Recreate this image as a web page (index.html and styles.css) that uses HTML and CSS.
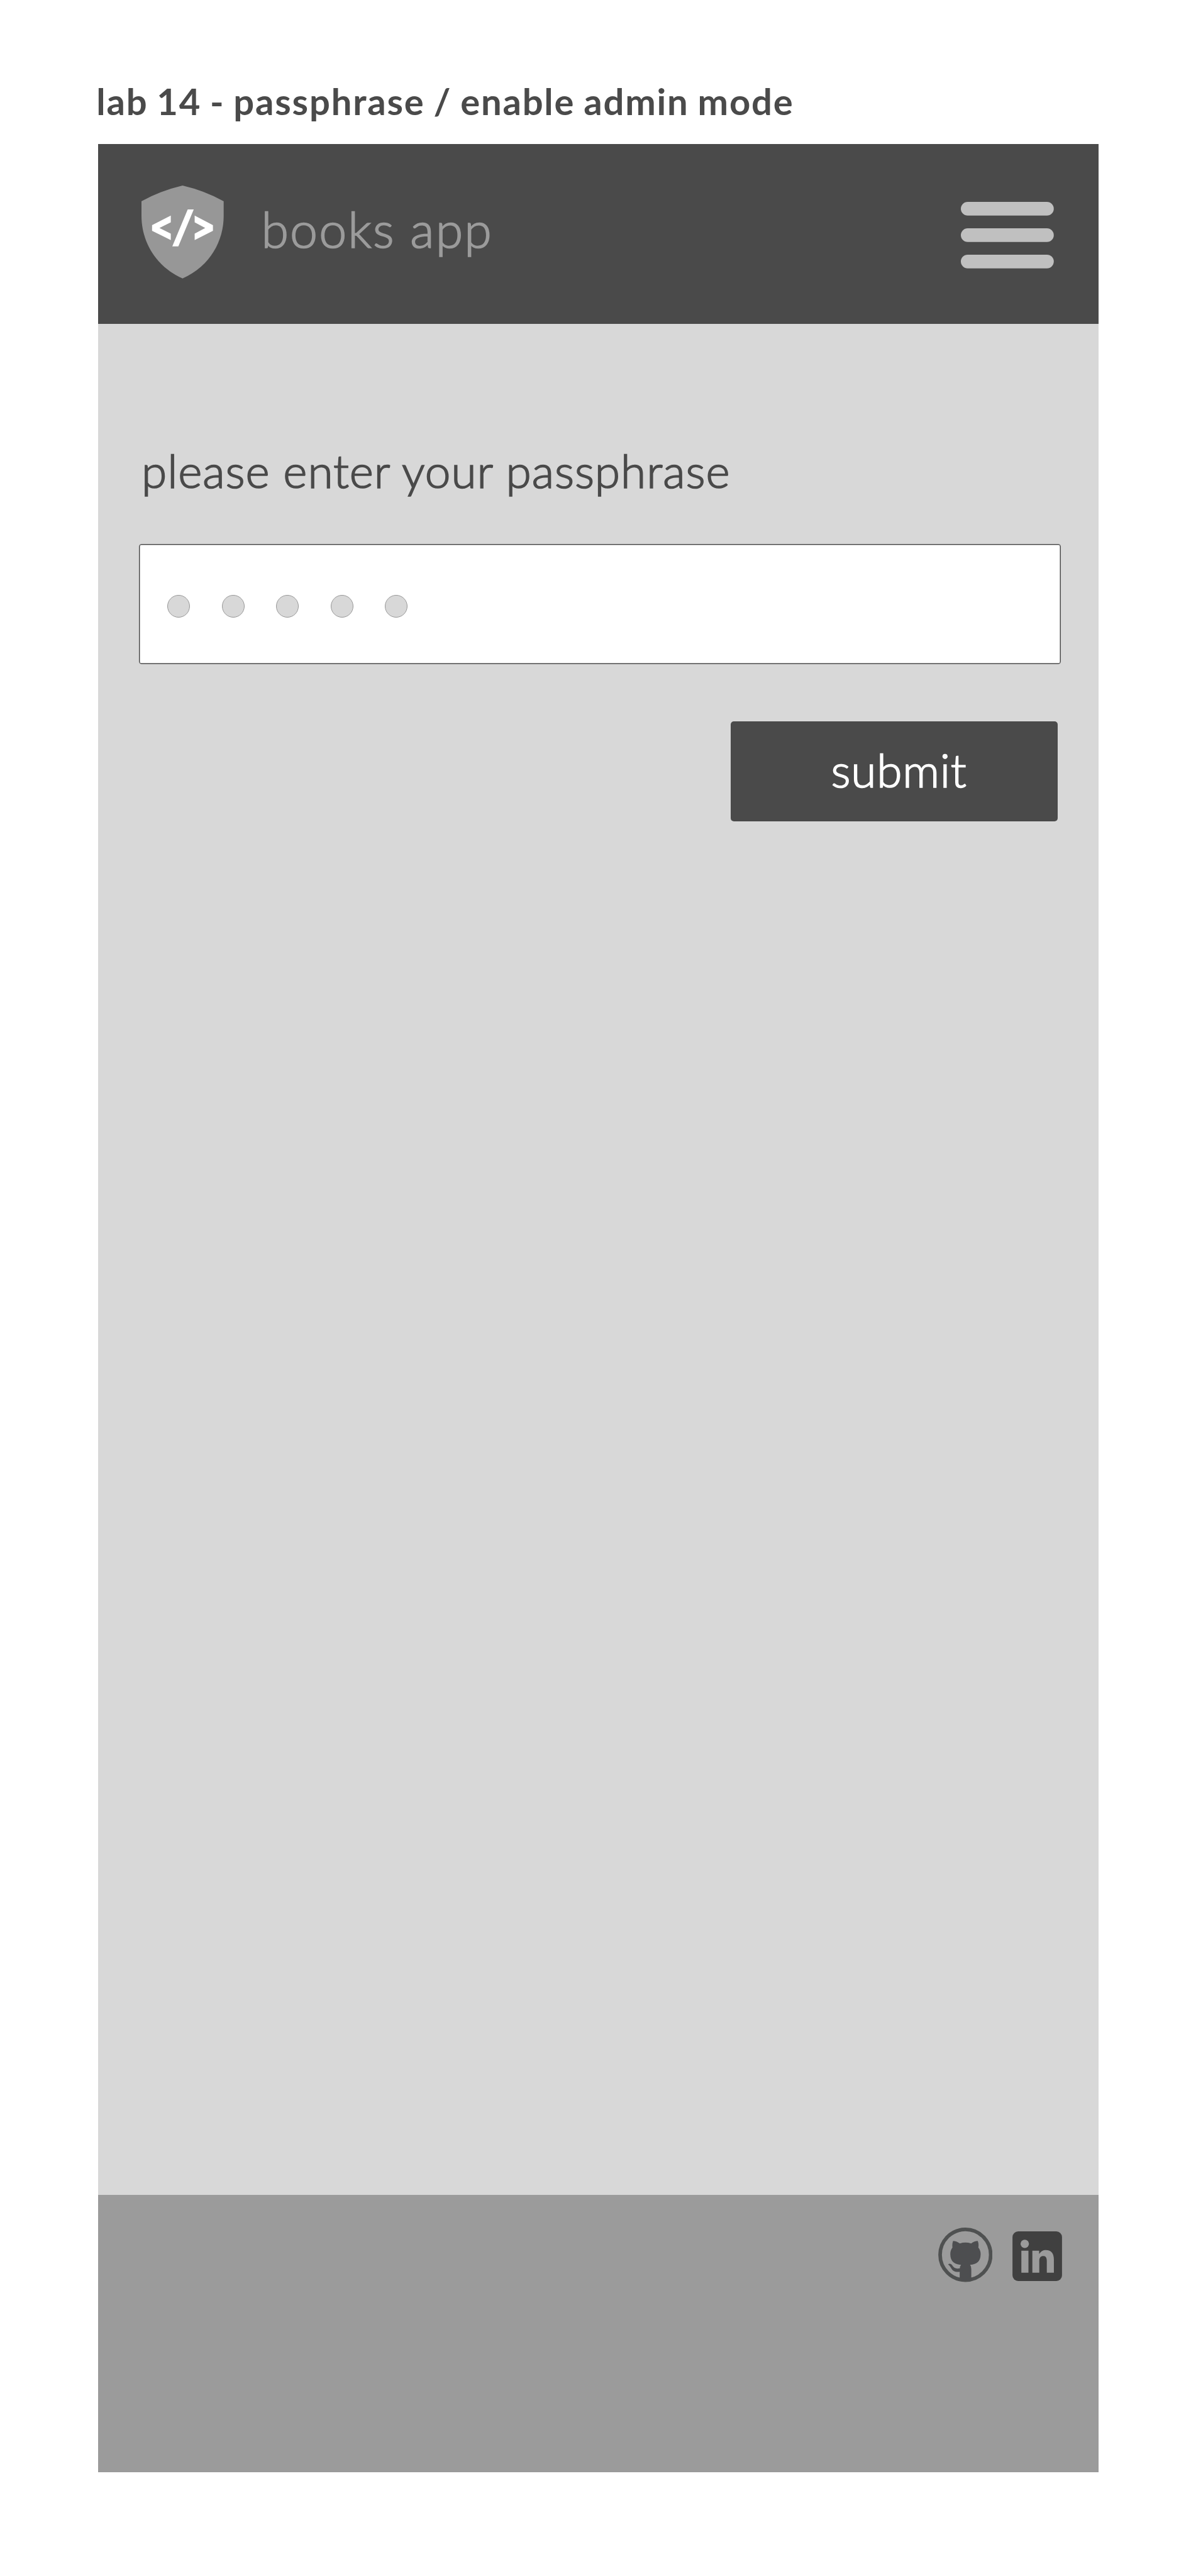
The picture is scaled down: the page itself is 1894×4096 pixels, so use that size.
FILE: index.html
```html
<!DOCTYPE html>
<html lang="en">
<head>
<meta charset="utf-8">
<title>books app</title>
<link rel="stylesheet" href="styles.css">
</head>
<body>
<h1 class="caption">lab 14 - passphrase / enable admin mode</h1>
<div class="screen">
  <header class="header">
    <svg class="logo" viewBox="97 88 544 615" preserveAspectRatio="none" aria-hidden="true">
      <path fill="#979797" d="M369 88Q515 122 641 192V290C641 450 555 620 369 703C183 620 97 450 97 290V192Q223 122 369 88Z"/>
      <path fill="#fff" d="M291 287V331L216 369L291 406V449L167 388V350ZM403 246H443L341 491H301ZM449 287L570 350V388L449 449V406L519 369L449 331Z"/>
    </svg>
    <span class="brand">books app</span>
    <svg class="menu" viewBox="0 0 147.8 105.7" role="img" aria-label="menu">
      <rect width="147.8" height="21.8" rx="10.9"/>
      <rect y="42" width="147.8" height="21.8" rx="10.9"/>
      <rect y="83.9" width="147.8" height="21.8" rx="10.9"/>
    </svg>
  </header>
  <main class="main">
    <label class="label">please enter your passphrase</label>
    <div class="field">
      <span class="dot"></span><span class="dot"></span><span class="dot"></span><span class="dot"></span><span class="dot"></span>
    </div>
    <button class="submit" type="button">submit</button>
  </main>
  <footer class="footer">
    <svg class="github" viewBox="90 342 360 361" aria-hidden="true">
      <circle cx="270" cy="522.5" r="168" fill="none" stroke="#4f5151" stroke-width="24"/>
      <path fill="#4d4e50" d="M188 431C204 431 219 438 233 447Q270 436 308 447C322 438 337 431 352 431Q360 451 356 474C367 487 372 503 371 521C370 565 347 584 301 589Q309 599 309 617V671Q311 684 315 688Q270 699 224 688Q232 683 232 671V635C207 639 188 633 178 615C171 603 166 594 155 587C164 578 177 583 184 595C195 614 213 617 233 612Q234 597 241 589C193 584 171 564 170 521C169 503 174 487 184 474Q181 451 188 431Z"/>
    </svg>
    <svg class="linkedin" viewBox="583 366 329 330" aria-hidden="true">
      <rect x="583" y="366" width="329" height="330" rx="38" fill="#404040"/>
      <circle cx="664.500" cy="449" r="28" fill="#9b9b9b"/>
      <path fill="#9b9b9b" d="M642 494H689V641H642ZM715 494H760V516C773 498 786 490 805 490C841 490 858 513 858 553V641H811V563C811 541 804 530 788 530C770 530 761 541 761 563V641H715Z"/>
    </svg>
  </footer>
</div>
</body>
</html>
```
FILE: styles.css
```css
* { box-sizing: border-box; }

body {
  margin: 0;
  height: 4096px;
  background: #fff;
  color: #4a4a4a;
  font-family: Lato, "Liberation Sans", sans-serif;
}

.caption {
  margin: 0;
  height: 229px;
  padding: 127px 0 0 153.2px;
  font-size: 58px;
  font-weight: 700;
  line-height: 68px;
  letter-spacing: 1.8px;
  word-spacing: -2px;
  white-space: nowrap;
}

.screen {
  display: flex;
  flex-direction: column;
  width: 1591px;
  height: 3702px;
  margin-left: 156px;
}

.header {
  display: flex;
  align-items: flex-start;
  height: 286px;
  padding: 66px 70.8px 0 69.1px;
  background: #4a4a4a;
}

.logo { width: 130.700px; height: 147.8px; }

.brand {
  margin: 23px auto 0 59.6px;
  color: #9b9b9b;
  font-size: 79px;
  font-weight: 300;
  line-height: 92px;
  letter-spacing: 2.1px;
  -webkit-text-stroke: 1.7px currentColor;
}

.menu {
  width: 147.8px;
  height: 105.7px;
  margin-top: 26.2px;
  fill: #c0c0c0;
}

.main {
  display: flex;
  flex: 1;
  flex-direction: column;
  align-items: stretch;
  padding: 190px 60px 0 65px;
  background: #d8d8d8;
}

.label {
  padding-left: 4px;
  font-size: 73px;
  font-weight: 300;
  line-height: 86px;
  letter-spacing: .95px;
  -webkit-text-stroke: 1.7px currentColor;
}

.field {
  display: flex;
  align-items: center;
  gap: 50.5px;
  height: 191px;
  margin-top: 74px;
  padding: 7px 0 0 44px;
  background: #fff;
  border: 1px solid #4a4a4a;
  border-radius: 4px;
  box-shadow: inset 0 0 0 .5px #4a4a4a;
}

.dot {
  width: 36px;
  height: 36px;
  background: #d8d8d8;
  border: 1px solid #979797;
  border-radius: 50%;
}

.submit {
  align-self: flex-end;
  width: 520px;
  height: 159px;
  margin: 91px 5px 0 0;
  padding: 0 0 6px 159.4px;
  border: 0;
  border-radius: 5px;
  background: #4a4a4a;
  color: #fff;
  font: 300 73px/86px Lato, "Liberation Sans", sans-serif;
  letter-spacing: .8px;
  text-align: left;
  -webkit-text-stroke: 1.7px currentColor;
}

.footer {
  display: flex;
  justify-content: flex-end;
  align-items: flex-start;
  gap: 32px;
  height: 441px;
  padding: 52px 57.6px 0 0;
  background: #9b9b9b;
}

.github { width: 86.5px; height: 86.5px; }

.linkedin { width: 79px; height: 79px; margin-top: 6px; }
```
